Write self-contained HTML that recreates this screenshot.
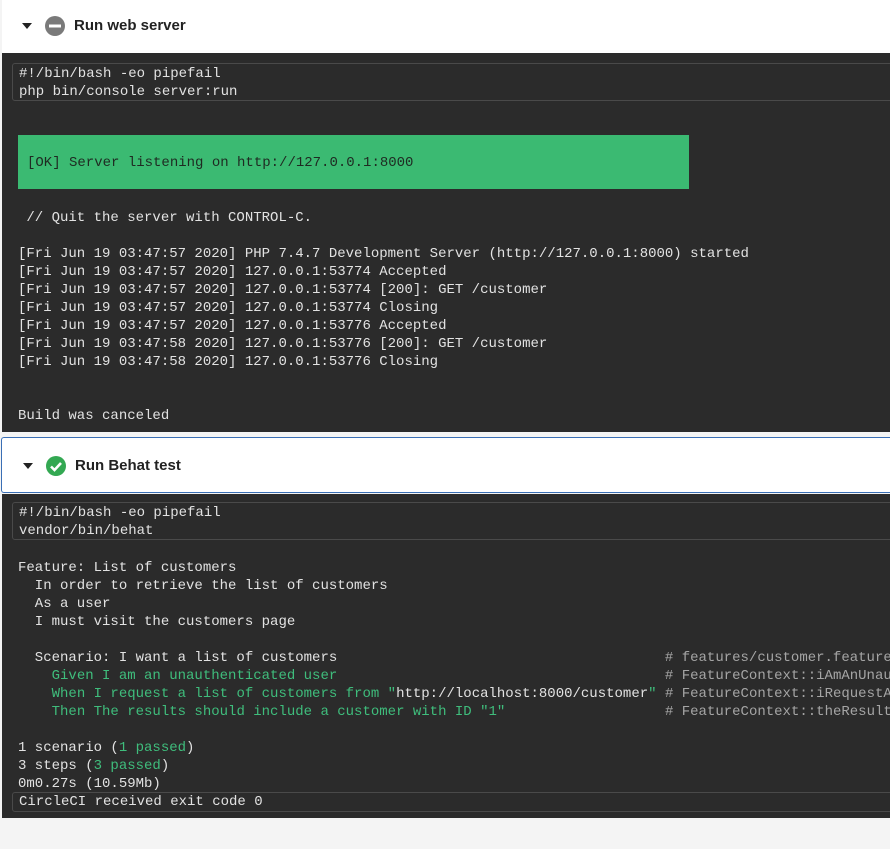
<!DOCTYPE html>
<html><head><meta charset="utf-8"><style>
html,body{margin:0;padding:0;width:890px;height:849px;overflow:hidden;background:#f4f4f4;font-family:"Liberation Sans",sans-serif;}
.hdr{position:absolute;left:2px;width:888px;background:#fff;}
.hdr .t{position:absolute;left:72px;font-weight:bold;font-size:15px;color:#222;}
.dark{position:absolute;left:2px;width:888px;background:#2b2b2b;overflow:hidden;}
.box{position:absolute;left:10px;width:890px;border:1px solid #4a4a4a;border-radius:3px;background:#2b2b2b;}
pre{margin:0;font-family:"Liberation Mono",monospace;font-size:14px;line-height:18px;color:#e2e2e2;white-space:pre;}
.abs{position:absolute;left:16px;}
.g{color:#3fbd7c;}
.c{color:#a5a5a5;}
.ok{position:absolute;left:16px;top:82px;width:671px;height:54px;background:#3bba72;}
.ok pre{color:#1f2a22;position:absolute;left:9px;top:19px;}
</style></head><body>
<div class="hdr" style="top:0;height:53px;">
 <svg style="position:absolute;left:19px;top:22px" width="12" height="8"><path d="M1 1 L11 1 L6 7Z" fill="#222"/></svg>
 <svg style="position:absolute;left:42px;top:15px" width="22" height="22"><circle cx="11" cy="11" r="10" fill="#7a7a7a"/><rect x="5" y="9.5" width="12" height="3" fill="#fff"/></svg>
 <div class="t" style="top:17px;">Run web server</div>
</div>
<div class="dark" style="top:53px;height:379px;">
 <div class="box" style="top:10px;height:36px;"><pre style="position:absolute;left:6px;top:1px;">#!/bin/bash -eo pipefail
php bin/console server:run</pre></div>
 <div class="ok"><pre>[OK] Server listening on http://127.0.0.1:8000</pre></div>
 <pre class="abs" style="top:156px;"> // Quit the server with CONTROL-C.

[Fri Jun 19 03:47:57 2020] PHP 7.4.7 Development Server (http://127.0.0.1:8000) started
[Fri Jun 19 03:47:57 2020] 127.0.0.1:53774 Accepted
[Fri Jun 19 03:47:57 2020] 127.0.0.1:53774 [200]: GET /customer
[Fri Jun 19 03:47:57 2020] 127.0.0.1:53774 Closing
[Fri Jun 19 03:47:57 2020] 127.0.0.1:53776 Accepted
[Fri Jun 19 03:47:58 2020] 127.0.0.1:53776 [200]: GET /customer
[Fri Jun 19 03:47:58 2020] 127.0.0.1:53776 Closing


Build was canceled</pre>
</div>
<div class="hdr" style="top:437px;height:54px;border:1px solid #3a6fb5;border-right:none;border-radius:3px 0 0 3px;left:1px;">
 <svg style="position:absolute;left:20px;top:24px" width="12" height="8"><path d="M1 1 L11 1 L6 7Z" fill="#222"/></svg>
 <svg style="position:absolute;left:43px;top:17px" width="22" height="22"><circle cx="11" cy="11" r="10" fill="#33a852"/><path d="M6 11.5 L9.5 15 L16 8" stroke="#fff" stroke-width="2.6" fill="none"/></svg>
 <div class="t" style="top:19px;left:73px;">Run Behat test</div>
</div>
<div class="dark" style="top:494px;height:324px;">
 <div class="box" style="top:8px;height:36px;"><pre style="position:absolute;left:6px;top:1px;">#!/bin/bash -eo pipefail
vendor/bin/behat</pre></div>
 <pre class="abs" style="top:65px;">Feature: List of customers
  In order to retrieve the list of customers
  As a user
  I must visit the customers page

  Scenario: I want a list of customers                                       <span class="c"># features/customer.feature:6</span>
    <span class="g">Given I am an unauthenticated user</span>                                       <span class="c"># FeatureContext::iAmAnUnauthenticatedUser()</span>
    <span class="g">When I request a list of customers from "</span>http://localhost:8000/customer<span class="g">"</span> <span class="c"># FeatureContext::iRequestAList()</span>
    <span class="g">Then The results should include a customer with ID "1"</span>                   <span class="c"># FeatureContext::theResults()</span>

1 scenario (<span class="g">1 passed</span>)
3 steps (<span class="g">3 passed</span>)
0m0.27s (10.59Mb)</pre>
 <div class="box" style="top:298px;height:18px;"><pre style="position:absolute;left:6px;top:0px;">CircleCI received exit code 0</pre></div>
</div>
</body></html>
